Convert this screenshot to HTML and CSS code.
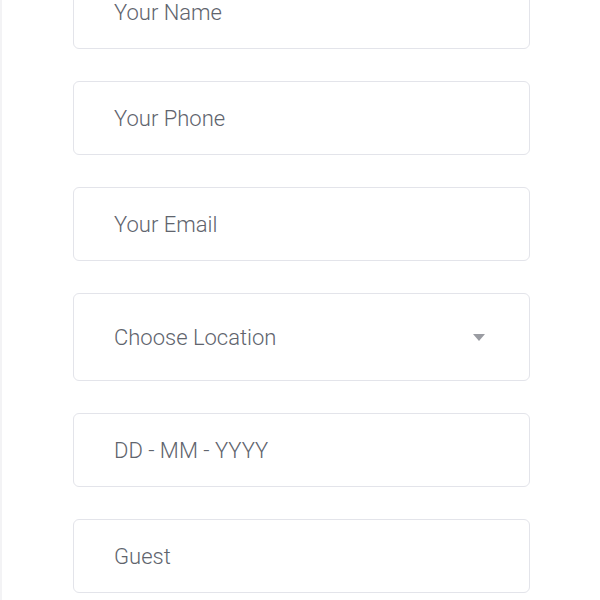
FILE: index.html
```html
<!DOCTYPE html>
<html>
<head>
<meta charset="utf-8">
<link rel="stylesheet" href="styles.css">
</head>
<body>
<div class="page">
  <form class="form">
    <div class="field"><span class="ph">Your Name</span></div>
    <div class="field"><span class="ph">Your Phone</span></div>
    <div class="field"><span class="ph">Your Email</span></div>
    <div class="field select"><span class="ph">Choose Location</span><span class="caret"></span></div>
    <div class="field"><span class="ph">DD - MM - YYYY</span></div>
    <div class="field"><span class="ph">Guest</span></div>
  </form>
</div>
</body>
</html>
```
FILE: styles.css
```css
html, body {
  margin: 0;
  padding: 0;
  background: #fff;
}
.page {
  width: 600px;
  height: 600px;
  overflow: hidden;
  box-sizing: border-box;
  border-left: 2px solid #f3f3f5;
  padding-left: 71px;
}
.form {
  width: 457px;
  margin-top: -25px;
  display: flex;
  flex-direction: column;
  gap: 32px;
}
.field {
  box-sizing: border-box;
  height: 74px;
  border: 1px solid #e3e4ea;
  border-radius: 6px;
  padding: 0 40px;
  display: flex;
  align-items: center;
  font-family: Roboto, "Liberation Sans", sans-serif;
  font-size: 22px;
  font-weight: 300;
  color: #60646d;
}
.field.select {
  height: 88px;
  justify-content: space-between;
  padding-right: 44px;
}
.caret {
  width: 0;
  height: 0;
  border-left: 6px solid transparent;
  border-right: 6px solid transparent;
  border-top: 7px solid #9a9ca2;
}
```
